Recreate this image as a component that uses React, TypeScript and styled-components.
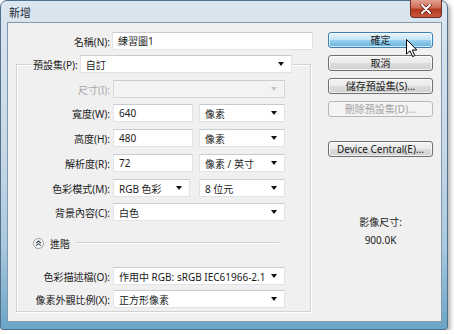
import React from "react"
import styled, { createGlobalStyle } from "styled-components";

const GlobalStyle = createGlobalStyle`
    html, body {
        margin: 0;
        padding: 0;
        background: #ffffff;
    }
    body {
        font-family: "Noto Sans", "Noto Sans CJK TC", sans-serif;
        font-size: 10px;
        color: #1b1b1b;
    }
`

const Janela = styled.div`
    position: relative;
    box-sizing: border-box;
    width: 448px;
    height: 330px;
    display: flex;
    flex-direction: column;
    padding: 0 5px 7px 6px;
    border: 1px solid #51708c;
    border-radius: 7px 7px 3px 3px;
    background: linear-gradient(180deg, #dbe6f0 0%, #c8d8e7 45%, #a9c8de 75%, #6aa5c6 100%);
    box-shadow: 2px 3px 5px rgba(0, 0, 0, 0.35);
`

const BarraTitulo = styled.div`
    height: 21px;
    display: flex;
    justify-content: space-between;
    align-items: flex-start;
`

const Titulo = styled.span`
    font-size: 11px;
    line-height: 11px;
    margin: 6px 0 0 2px;
    color: #1e2a36;
`

const BotaoFechar = styled.div`
    width: 32px;
    height: 18px;
    margin-top: -1px;
    box-sizing: border-box;
    border: 1px solid #6b2a22;
    border-top: none;
    border-radius: 0 0 4px 4px;
    background: linear-gradient(180deg, #e3a292 0%, #cf6d58 45%, #b23a22 55%, #c85a3c 100%);
    display: flex;
    align-items: center;
    justify-content: center;
`

const Cliente = styled.div`
    flex: 1;
    display: flex;
    background: #f0f0f0;
    border: 1px solid #8399ad;
`

const ColunaEsquerda = styled.div`
    width: 303px;
    display: flex;
    flex-direction: column;
`

const Linha = styled.div<{ $top?: number }>`
    display: grid;
    grid-template-columns: 93px auto;
    column-gap: 3px;
    align-items: center;
    height: 18px;
    margin-top: ${p => p.$top ?? 0}px;
`

const LinhaNome = styled(Linha)`
    grid-template-columns: 102px auto;
    column-gap: 2px;
`

const Rotulo = styled.span<{ $disabled?: boolean }>`
    text-align: right;
    white-space: nowrap;
    color: ${p => p.$disabled ? "#a8a8a8" : "#1b1b1b"};
`

const Controles = styled.div<{ $gap?: number }>`
    display: flex;
    gap: ${p => p.$gap ?? 6}px;
`

const CampoTexto = styled.div<{ $w: number }>`
    box-sizing: border-box;
    width: ${p => p.$w}px;
    height: 18px;
    padding: 0 5px;
    line-height: 16px;
    background: #ffffff;
    border: 1px solid #e0e4e8;
    border-top-color: #c8ccd1;
    white-space: nowrap;
`

const Seletor = styled.div<{ $w: number; $disabled?: boolean }>`
    box-sizing: border-box;
    width: ${p => p.$w}px;
    height: 18px;
    padding: 0 5px;
    display: flex;
    align-items: center;
    justify-content: space-between;
    background: ${p => p.$disabled ? "#f3f3f3" : "#ffffff"};
    border: 1px solid ${p => p.$disabled ? "#d6d6d6" : "#e0e4e8"};
    border-top-color: ${p => p.$disabled ? "#cccccc" : "#c8ccd1"};
    white-space: nowrap;
`

const Seta = styled.span<{ $disabled?: boolean }>`
    width: 0;
    height: 0;
    margin-right: 2px;
    border-left: 3px solid transparent;
    border-right: 3px solid transparent;
    border-top: 4px solid ${p => p.$disabled ? "#c4c4c4" : "#111111"};
`

const Grupo = styled.fieldset`
    margin: 5px 0 0 8px;
    padding: 7px 0 3px 0;
    width: 295px;
    box-sizing: border-box;
    border: 1px solid #d3d3d3;
    box-shadow: inset 1px 1px 0 #ffffff, 1px 1px 0 #ffffff;
    display: flex;
    flex-direction: column;
`

const Legenda = styled.legend`
    margin-left: 14px;
    padding: 0 1px 0 2px;
    display: flex;
    align-items: center;
    gap: 2px;
    background: #f0f0f0;
`

const LinhaAvancado = styled.div`
    display: flex;
    align-items: center;
    height: 12px;
    margin: 16px 31px 0 16px;
    gap: 6px;
`

const Separador = styled.div`
    flex: 1;
    height: 0;
    border-top: 1px solid #d0d0d0;
    border-bottom: 1px solid #ffffff;
`

const ColunaDireita = styled.div`
    width: 105px;
    margin-left: 17px;
    display: flex;
    flex-direction: column;
`

const Botao = styled.div<{ $top: number; $variant?: "default" | "disabled" }>`
    box-sizing: border-box;
    height: 16px;
    margin-top: ${p => p.$top}px;
    border-radius: 3px;
    text-align: center;
    line-height: 14px;
    white-space: nowrap;
    border: 1px solid ${p => p.$variant === "default" ? "#3c7fb1" : p.$variant === "disabled" ? "#b5b9bc" : "#707070"};
    color: ${p => p.$variant === "disabled" ? "#a3a3a3" : "#1b1b1b"};
    background: ${p => p.$variant === "default"
        ? "linear-gradient(180deg, #e5f4fc 0%, #c4e5f6 48%, #98d1ef 52%, #68b3db 100%)"
        : p.$variant === "disabled"
            ? "#f4f4f4"
            : "linear-gradient(180deg, #f2f2f2 0%, #ebebeb 48%, #dddddd 52%, #cfcfcf 100%)"};
    box-shadow: inset 0 0 0 1px ${p => p.$variant === "disabled" ? "transparent" : "rgba(255,255,255,0.7)"};
`

const InfoImagem = styled.div`
    margin-top: 59px;
    display: flex;
    flex-direction: column;
    align-items: center;
    gap: 6px;
    line-height: 12px;
`

const Cursor = styled.svg`
    position: absolute;
    left: 405px;
    top: 38px;
`

const IconeAvancado = () => (
    <svg width="11" height="11" viewBox="0 0 11 11">
        <circle cx="5.5" cy="5.5" r="5" fill="#fbfbfb" stroke="#9a9a9a" />
        <polyline points="3,5 5.5,3 8,5" fill="none" stroke="#3e4f62" strokeWidth="1.1" />
        <polyline points="3,7.6 5.5,5.6 8,7.6" fill="none" stroke="#3e4f62" strokeWidth="1.1" />
    </svg>
)

export default function App() {
    return (
        <>
            <GlobalStyle />
            <Janela>
                <BarraTitulo>
                    <Titulo>新增</Titulo>
                    <BotaoFechar>
                        <svg width="12" height="10" viewBox="0 0 12 10">
                            <path d="M2 1 L10 9 M10 1 L2 9" stroke="#5a1a10" strokeWidth="3.4" strokeLinecap="round" />
                            <path d="M2 1 L10 9 M10 1 L2 9" stroke="#ffffff" strokeWidth="2" strokeLinecap="round" />
                        </svg>
                    </BotaoFechar>
                </BarraTitulo>
                <Cliente>
                    <ColunaEsquerda>
                        <LinhaNome $top={9}>
                            <Rotulo>名稱(N):</Rotulo>
                            <CampoTexto $w={201}>練習圖1</CampoTexto>
                        </LinhaNome>
                        <Grupo>
                            <Legenda>
                                <Rotulo>預設集(P):</Rotulo>
                                <Seletor $w={212}>自訂<Seta /></Seletor>
                            </Legenda>
                            <Linha>
                                <Rotulo $disabled>尺寸(I):</Rotulo>
                                <Seletor $w={172} $disabled><span /><Seta $disabled /></Seletor>
                            </Linha>
                            <Linha $top={6}>
                                <Rotulo>寬度(W):</Rotulo>
                                <Controles>
                                    <CampoTexto $w={80}>640</CampoTexto>
                                    <Seletor $w={86}>像素<Seta /></Seletor>
                                </Controles>
                            </Linha>
                            <Linha $top={7}>
                                <Rotulo>高度(H):</Rotulo>
                                <Controles>
                                    <CampoTexto $w={80}>480</CampoTexto>
                                    <Seletor $w={86}>像素<Seta /></Seletor>
                                </Controles>
                            </Linha>
                            <Linha $top={7}>
                                <Rotulo>解析度(R):</Rotulo>
                                <Controles>
                                    <CampoTexto $w={80}>72</CampoTexto>
                                    <Seletor $w={86}>像素 / 英寸<Seta /></Seletor>
                                </Controles>
                            </Linha>
                            <Linha $top={7}>
                                <Rotulo>色彩模式(M):</Rotulo>
                                <Controles $gap={9}>
                                    <Seletor $w={77}>RGB 色彩<Seta /></Seletor>
                                    <Seletor $w={86}>8 位元<Seta /></Seletor>
                                </Controles>
                            </Linha>
                            <Linha $top={6}>
                                <Rotulo>背景內容(C):</Rotulo>
                                <Seletor $w={172}>白色<Seta /></Seletor>
                            </Linha>
                            <LinhaAvancado>
                                <IconeAvancado />
                                <span>進階</span>
                                <Separador />
                            </LinhaAvancado>
                            <Linha $top={18}>
                                <Rotulo>色彩描述檔(O):</Rotulo>
                                <Seletor $w={172}>作用中 RGB: sRGB IEC61966-2.1<Seta /></Seletor>
                            </Linha>
                            <Linha $top={5}>
                                <Rotulo>像素外觀比例(X):</Rotulo>
                                <Seletor $w={172}>正方形像素<Seta /></Seletor>
                            </Linha>
                        </Grupo>
                    </ColunaEsquerda>
                    <ColunaDireita>
                        <Botao $top={9} $variant="default">確定</Botao>
                        <Botao $top={7}>取消</Botao>
                        <Botao $top={7}>儲存預設集(S)...</Botao>
                        <Botao $top={7} $variant="disabled">刪除預設集(D)...</Botao>
                        <Botao $top={24}>Device Central(E)...</Botao>
                        <InfoImagem>
                            <span>影像尺寸:</span>
                            <span>900.0K</span>
                        </InfoImagem>
                    </ColunaDireita>
                </Cliente>
                <Cursor width="12" height="19" viewBox="0 0 12 19">
                    <path d="M0.5 0.5 L0.5 15 L4 11.8 L6.6 17.6 L8.8 16.7 L6.3 11 L10.8 11 Z" fill="#ffffff" stroke="#000000" strokeWidth="1" strokeLinejoin="round" />
                </Cursor>
            </Janela>
        </>
    )
}
